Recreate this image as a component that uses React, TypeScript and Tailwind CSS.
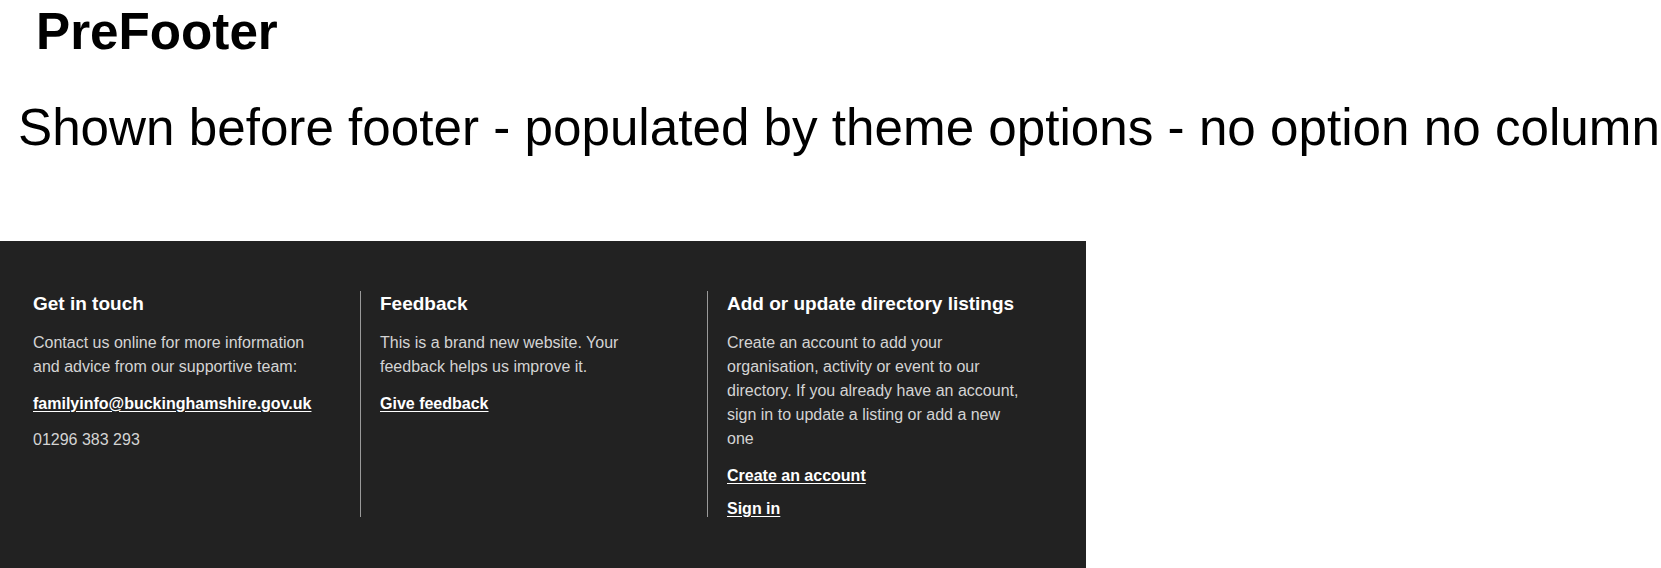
import React from "react";

const font = { fontFamily: '"Liberation Sans", Arial, Helvetica, sans-serif' };

type Column = {
  title: string;
  body: string;
  links: string[];
  extra?: string;
};

const columns: Column[] = [
  {
    title: "Get in touch",
    body: "Contact us online for more information and advice from our supportive team:",
    links: ["familyinfo@buckinghamshire.gov.uk"],
    extra: "01296 383 293",
  },
  {
    title: "Feedback",
    body: "This is a brand new website. Your feedback helps us improve it.",
    links: ["Give feedback"],
  },
  {
    title: "Add or update directory listings",
    body: "Create an account to add your organisation, activity or event to our directory. If you already have an account, sign in to update a listing or add a new one",
    links: ["Create an account", "Sign in"],
  },
];

function FooterColumn({ col, first }: { col: Column; first: boolean }) {
  return (
    <div
      className={
        first
          ? "pl-[20px] pr-[30px]"
          : "border-l border-[#9a9a9a] pl-[19px] pr-[30px]"
      }
    >
      <h2 className="text-[19px] leading-[25px] font-bold text-white mb-[15px]">
        {col.title}
      </h2>
      <p className="text-[16px] leading-[24px] text-[#d4d4d4]">{col.body}</p>
      <div className="flex flex-col gap-[17px] mt-[17px]">
        {col.links.map((l) => (
          <a
            key={l}
            href="#"
            className="text-[16px] leading-none font-bold text-white underline underline-offset-2"
          >
            {l}
          </a>
        ))}
      </div>
      {col.extra && (
        <p className="text-[16px] leading-[24px] text-[#d4d4d4] mt-[16px]">
          {col.extra}
        </p>
      )}
    </div>
  );
}

export default function App() {
  return (
    <div className="bg-white text-black" style={font}>
      {/* placeholder block shown before the footer */}
      <div className="flex flex-col pt-[2px]">
        <h1 className="text-[51.2px] leading-[60px] font-bold pl-[36px]">
          PreFooter
        </h1>
        <p className="text-[51.2px] leading-[60px] pl-[18px] mt-[36px] whitespace-nowrap">
          Shown before footer - populated by theme options - no option no column
        </p>
      </div>

      <footer className="w-[1086px] bg-[#222222] mt-[83px] pt-[50px] pb-[60px] pl-[13px] pr-[32px]">
        <div className="grid grid-cols-3">
          {columns.map((c, i) => (
            <FooterColumn key={c.title} col={c} first={i === 0} />
          ))}
        </div>
      </footer>
    </div>
  );
}
